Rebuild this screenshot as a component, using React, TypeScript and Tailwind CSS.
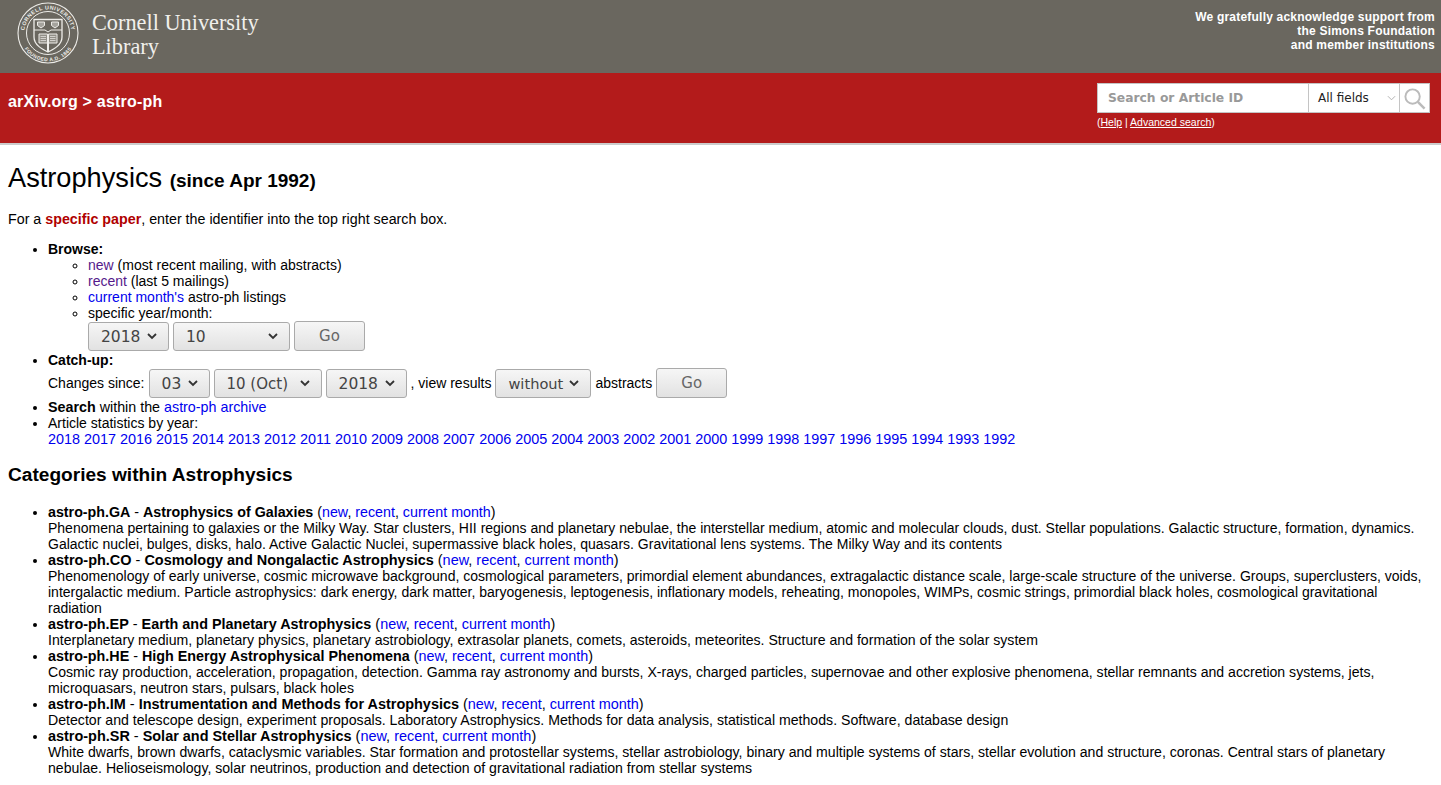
import React from 'react';

const Chevron = () => (
  <svg viewBox="0 0 10 7" className="w-[10px] h-[7px] shrink-0" fill="none" stroke="#333" strokeWidth="1.8">
    <path d="M1 1 L5 5 L9 1" />
  </svg>
);

const FakeSelect = ({ label, w, size = 'text-[15px]' }: { label: string; w: string; size?: string }) => (
  <span className={`inline-flex items-center justify-between h-[29px] pl-[12px] pr-[11px] pt-[1px] rounded-[3px] border border-[#aaa] bg-gradient-to-b from-[#f6f6f6] to-[#e2e2e2] font-['DejaVu_Sans'] text-[#444] align-middle ${size} ${w}`}>
    {label}
    <Chevron />
  </span>
);

const GoButton = ({ w }: { w: string }) => (
  <span className={`inline-flex items-center justify-center h-[30px] rounded-[3px] border border-[#aaa] bg-gradient-to-b from-[#f6f6f6] to-[#e2e2e2] font-['DejaVu_Sans'] text-[15px] text-[#666] align-middle ${w}`}>
    Go
  </span>
);

const L = ({ children, visited }: { children: React.ReactNode; visited?: boolean }) => (
  <a href="#" className={visited ? 'text-[#551a8b]' : 'text-[#0000ee]'}>{children}</a>
);

const years = ['2018','2017','2016','2015','2014','2013','2012','2011','2010','2009','2008','2007','2006','2005','2004','2003','2002','2001','2000','1999','1998','1997','1996','1995','1994','1993','1992'];

const categories = [
  {
    id: 'astro-ph.GA',
    name: 'Astrophysics of Galaxies',
    head: 'text-[14.26px]',
    size: 'text-[14px]',
    desc: 'Phenomena pertaining to galaxies or the Milky Way. Star clusters, HII regions and planetary nebulae, the interstellar medium, atomic and molecular clouds, dust. Stellar populations. Galactic structure, formation, dynamics. Galactic nuclei, bulges, disks, halo. Active Galactic Nuclei, supermassive black holes, quasars. Gravitational lens systems. The Milky Way and its contents',
  },
  {
    id: 'astro-ph.CO',
    name: 'Cosmology and Nongalactic Astrophysics',
    head: 'text-[14.46px]',
    size: 'text-[14.02px]',
    desc: 'Phenomenology of early universe, cosmic microwave background, cosmological parameters, primordial element abundances, extragalactic distance scale, large-scale structure of the universe. Groups, superclusters, voids, intergalactic medium. Particle astrophysics: dark energy, dark matter, baryogenesis, leptogenesis, inflationary models, reheating, monopoles, WIMPs, cosmic strings, primordial black holes, cosmological gravitational radiation',
  },
  {
    id: 'astro-ph.EP',
    name: 'Earth and Planetary Astrophysics',
    head: 'text-[14.4px]',
    size: 'text-[14.1px]',
    desc: 'Interplanetary medium, planetary physics, planetary astrobiology, extrasolar planets, comets, asteroids, meteorites. Structure and formation of the solar system',
  },
  {
    id: 'astro-ph.HE',
    name: 'High Energy Astrophysical Phenomena',
    head: 'text-[14.34px]',
    size: 'text-[14.08px]',
    desc: 'Cosmic ray production, acceleration, propagation, detection. Gamma ray astronomy and bursts, X-rays, charged particles, supernovae and other explosive phenomena, stellar remnants and accretion systems, jets, microquasars, neutron stars, pulsars, black holes',
  },
  {
    id: 'astro-ph.IM',
    name: 'Instrumentation and Methods for Astrophysics',
    head: 'text-[14.45px]',
    size: 'text-[14.14px]',
    desc: 'Detector and telescope design, experiment proposals. Laboratory Astrophysics. Methods for data analysis, statistical methods. Software, database design',
  },
  {
    id: 'astro-ph.SR',
    name: 'Solar and Stellar Astrophysics',
    head: 'text-[14.44px]',
    size: 'text-[14.08px]',
    desc: 'White dwarfs, brown dwarfs, cataclysmic variables. Star formation and protostellar systems, stellar astrobiology, binary and multiple systems of stars, stellar evolution and structure, coronas. Central stars of planetary nebulae. Helioseismology, solar neutrinos, production and detection of gravitational radiation from stellar systems',
  },
];

const Seal = () => (
  <svg viewBox="0 0 62 62" className="w-[62px] h-[62px] shrink-0" fill="none" stroke="#eeede9">
    <defs>
      <path id="sealTop" d="M10.5 42.9 A23.7 23.7 0 1 1 51.5 42.9" />
      <path id="sealBottom" d="M6.5 45.1 A28.2 28.2 0 0 0 55.5 45.1" />
    </defs>
    <circle cx="31" cy="31" r="30" strokeWidth="1.1" />
    <circle cx="31" cy="31" r="21.5" strokeWidth="1" />
    <text fontFamily="Liberation Sans" fontWeight="700" fontSize="5.4" fill="#eeede9" stroke="none" letterSpacing="0.5">
      <textPath href="#sealTop" startOffset="50%" textAnchor="middle">CORNELL UNIVERSITY</textPath>
    </text>
    <text fontFamily="Liberation Sans" fontWeight="700" fontSize="5" fill="#eeede9" stroke="none" letterSpacing="0.4">
      <textPath href="#sealBottom" startOffset="50%" textAnchor="middle">FOUNDED A.D. 1865</textPath>
    </text>
    <path d="M17 17.5 H45 V35 C45 43 37 47 31 50 C25 47 17 43 17 35 Z" strokeWidth="1.3" />
    <path d="M17 28 H28 L31 30 L34 28 H45" strokeWidth="1" />
    <path d="M31 41 V50" strokeWidth="2" />
    <path d="M20.5 20 H27.5 V23.5 L24 26 L20.5 23.5 Z M34.5 20 H41.5 V23.5 L38 26 L34.5 23.5 Z" strokeWidth="1" fill="#eeede9" fillOpacity="0.45" />
    <path d="M22 32 H30.5 V41 H22 Z M31.5 32 H40 V41 H31.5 Z" fill="#eeede9" fillOpacity="0.3" strokeWidth="1" />
    <path d="M23.5 34.5 H29 M23.5 36.5 H29 M23.5 38.5 H29 M33 34.5 H38.5 M33 36.5 H38.5 M33 38.5 H38.5" strokeWidth="0.7" />
  </svg>
);

export default function App() {
  return (
    <div className="bg-white text-black font-['Liberation_Sans'] text-[14px] leading-[16px]">
      <div className="h-[73px] bg-[#6a675f] flex justify-between">
        <div className="flex pl-[17px] pt-[2px]">
          <Seal />
          <div className="ml-[13px] mt-[9px] font-['Liberation_Serif'] text-[22.3px] leading-[24px] text-[#f1f0ec]">
            Cornell University
            <br />
            Library
          </div>
        </div>
        <div className="pt-[10px] pr-[6px] text-right font-bold text-[12px] leading-[14px] tracking-[0.21px] text-white">
          We gratefully acknowledge support from
          <br />
          the Simons Foundation
          <br />
          and member institutions
        </div>
      </div>

      <div className="h-[70px] bg-[#b31b1b] border-b-[2px] border-[#cccccc] box-content flex justify-between">
        <div className="pl-[8px] pt-[20px] text-[16px] leading-[18px] tracking-[0.2px] font-bold text-white">
          arXiv.org &gt; astro-ph
        </div>
        <div className="pt-[10px] pr-[11px]">
          <div className="flex h-[30px] w-[333px] border border-[#c4c4c4] bg-white">
            <span className="w-[210px] pl-[10px] leading-[29px] font-['DejaVu_Sans'] font-bold text-[12.3px] text-[#999]">Search or Article ID</span>
            <span className="w-[91px] border-l border-[#c4c4c4] pl-[9px] pr-[3px] flex items-center justify-between font-['DejaVu_Sans'] text-[12px] text-[#222]">
              All fields
              <svg viewBox="0 0 10 6" className="w-[9px] h-[6px]" fill="none" stroke="#aaa" strokeWidth="1"><path d="M1 1 L5 5 L9 1" /></svg>
            </span>
            <span className="flex-1 border-l border-[#c4c4c4] flex items-center justify-center">
              <svg viewBox="0 0 24 24" className="w-[23px] h-[23px]" fill="none" stroke="#bbb">
                <circle cx="10" cy="10" r="7.5" strokeWidth="2" />
                <path d="M15.5 15.5 L22.5 22.5" strokeWidth="2.6" />
              </svg>
            </span>
          </div>
          <div className="mt-[3px] text-[10.5px] leading-[12px] text-white">
            (<a href="#" className="underline">Help</a> | <a href="#" className="underline">Advanced search</a>)
          </div>
        </div>
      </div>

      <div className="px-[8px]">
        <h1 className="mt-[18px] text-[27.2px] leading-[30px]">
          Astrophysics <span className="font-bold text-[19px]">(since Apr 1992)</span>
        </h1>
        <p className="mt-[15px] text-[14.28px]">
          For a <span className="font-bold text-[#b00000]">specific paper</span>, enter the identifier into the top right search box.
        </p>

        <ul className="mt-[14px] pl-[40px] list-disc">
          <li>
            <b>Browse:</b>
            <ul className="pl-[40px] list-[circle]">
              <li><L visited>new</L> (most recent mailing, with abstracts)</li>
              <li><L visited>recent</L> (last 5 mailings)</li>
              <li><L>current month's</L> astro-ph listings</li>
              <li>specific year/month:</li>
            </ul>
            <div className="pl-[40px] flex items-center gap-[4px] h-[30px]">
              <FakeSelect label="2018" w="w-[81px]" size="text-[15.5px]" />
              <FakeSelect label="10" w="w-[117px]" size="text-[15.5px]" />
              <GoButton w="w-[71px]" />
            </div>
          </li>
          <li className="mt-[1px]">
            <b>Catch-up:</b>
            <div className="flex items-center gap-[4px] h-[30px]">
              <span>Changes since:</span>
              <FakeSelect label="03" w="w-[61px]" size="text-[15.5px]" />
              <FakeSelect label="10 (Oct)" w="w-[108px]" size="text-[15px]" />
              <FakeSelect label="2018" w="w-[81px]" size="text-[15.5px]" />
              <span>, view results</span>
              <FakeSelect label="without" w="w-[96px]" size="text-[14.6px]" />
              <span>abstracts</span>
              <GoButton w="w-[71px]" />
            </div>
          </li>
          <li className="mt-[1px] text-[14.3px]"><b>Search</b> within the <L>astro-ph archive</L></li>
          <li>
            Article statistics by year:
            <br />
            <span className="text-[14.4px] text-[#0000ee]">
              {years.map(y => (
                <React.Fragment key={y}><a href="#">{y}</a>{' '}</React.Fragment>
              ))}
            </span>
          </li>
        </ul>

        <h2 className="mt-[18px] text-[19.1px] leading-[20px] font-bold">Categories within Astrophysics</h2>

        <ul className="mt-[19px] pl-[40px] list-disc pb-[9px]">
          {categories.map(c => (
            <li key={c.id}>
              <span className={c.head}>
                <b>{c.id}</b> - <b>{c.name}</b> (<L>new</L>, <L>recent</L>, <L>current month</L>)
              </span>
              <br />
              <span className={c.size}>{c.desc}</span>
            </li>
          ))}
        </ul>
      </div>
    </div>
  );
}
